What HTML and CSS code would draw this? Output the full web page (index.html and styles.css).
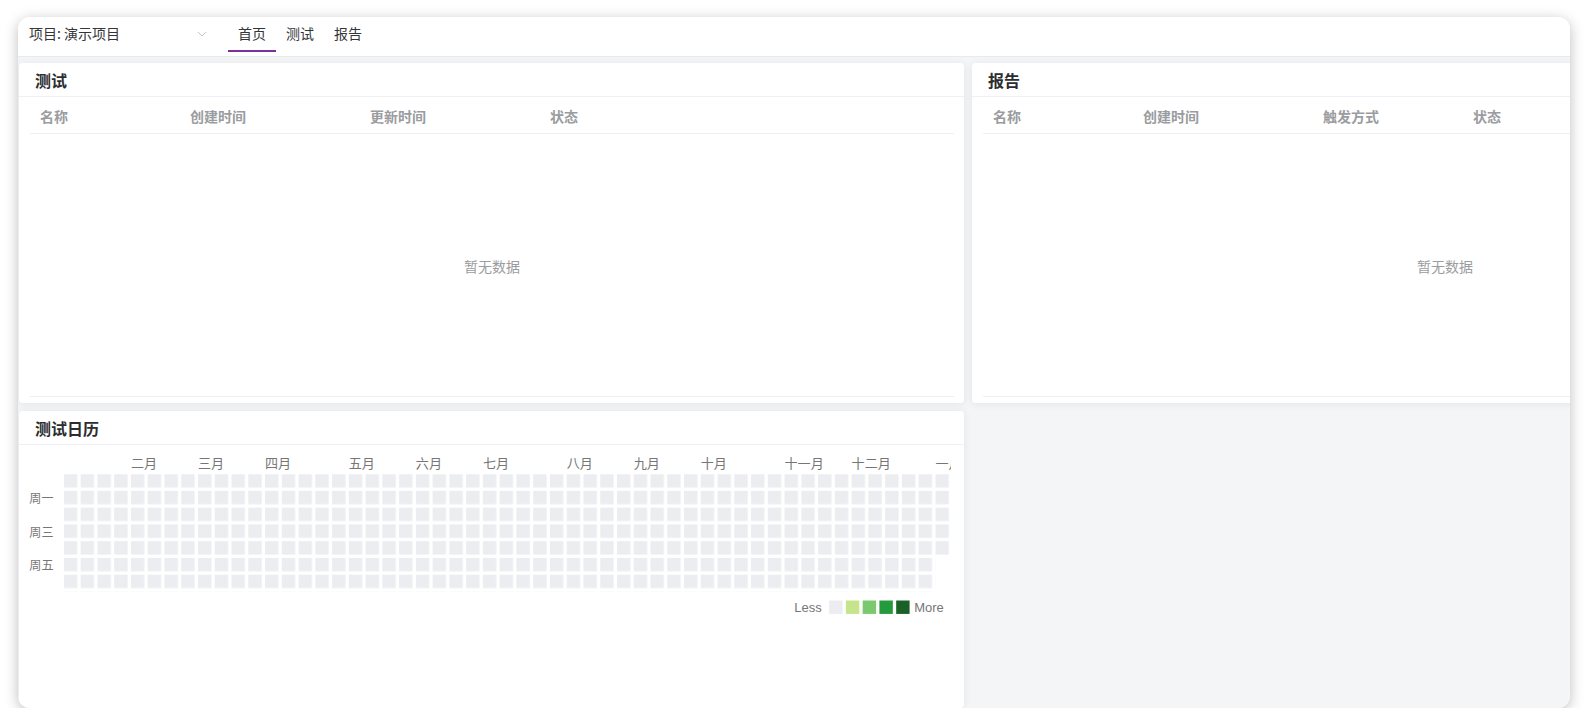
FILE: index.html
```html
<!DOCTYPE html>
<html lang="zh-CN">
<head>
<meta charset="utf-8">
<title>首页</title>
<link rel="stylesheet" href="styles.css">
</head>
<body>
<div class="window">
  <header class="topbar">
    <div class="project-select">
      <span class="project-label">项目: 演示项目</span>
      <svg class="chevron" width="10" height="6" viewBox="0 0 10 6"><polyline points="1,1 5,5 9,1" fill="none" stroke="#c4c4c8" stroke-width="1"/></svg>
    </div>
    <nav class="tabs">
      <div class="tab active">首页</div>
      <div class="tab">测试</div>
      <div class="tab">报告</div>
    </nav>
  </header>
  <main class="content">
    <section class="card card-top">
      <div class="card-title">测试</div>
      <div class="table">
        <div class="thead">
          <div class="th w150">名称</div>
          <div class="th w180">创建时间</div>
          <div class="th w180">更新时间</div>
          <div class="th grow">状态</div>
        </div>
        <div class="tbody"><span class="empty">暂无数据</span></div>
      </div>
    </section>
    <section class="card card-top">
      <div class="card-title">报告</div>
      <div class="table">
        <div class="thead">
          <div class="th w150">名称</div>
          <div class="th w180">创建时间</div>
          <div class="th w150">触发方式</div>
          <div class="th grow">状态</div>
        </div>
        <div class="tbody"><span class="empty">暂无数据</span></div>
      </div>
    </section>
    <section class="card card-cal">
      <div class="card-title">测试日历</div>
      <svg class="heatmap" viewBox="0 0 554.3 100" width="929" height="167.6">
        <defs>
          <pattern id="cells" x="25" y="15" width="10" height="10" patternUnits="userSpaceOnUse">
            <rect width="8" height="8" fill="#ebedf0"/>
          </pattern>
        </defs>
        <g class="months">
          <text x="65" y="8.2">二月</text>
          <text x="105" y="8.2">三月</text>
          <text x="145" y="8.2">四月</text>
          <text x="195" y="8.2">五月</text>
          <text x="235" y="8.2">六月</text>
          <text x="275" y="8.2">七月</text>
          <text x="325" y="8.2">八月</text>
          <text x="365" y="8.2">九月</text>
          <text x="405" y="8.2">十月</text>
          <text x="455" y="8.2">十一月</text>
          <text x="495" y="8.2">十二月</text>
          <text x="545" y="8.2">一月</text>
        </g>
        <g class="days">
          <text x="4.4" y="29">周一</text>
          <text x="4.4" y="49">周三</text>
          <text x="4.4" y="69">周五</text>
        </g>
        <rect x="25" y="15" width="520" height="70" fill="url(#cells)"/>
        <rect x="545" y="15" width="10" height="50" fill="url(#cells)"/>
        <g class="legend">
          <text class="less" x="477.2" y="94.6">Less</text>
          <rect x="481.6" y="90.4" width="8" height="8" fill="#ebedf0"/>
          <rect x="491.6" y="90.4" width="8" height="8" fill="#c6e48b"/>
          <rect x="501.6" y="90.4" width="8" height="8" fill="#7bc96f"/>
          <rect x="511.6" y="90.4" width="8" height="8" fill="#239a3b"/>
          <rect x="521.6" y="90.4" width="8" height="8" fill="#196127"/>
          <text class="more" x="532.4" y="94.6">More</text>
        </g>
      </svg>
    </section>
  </main>
</div>
</body>
</html>
```

FILE: styles.css
```css
html, body {
  margin: 0;
  padding: 0;
  background: #ffffff;
}

body {
  font-family: "Liberation Sans", "Noto Sans CJK SC", sans-serif;
  color: #333639;
  overflow: hidden;
}

.window {
  margin: 17px 0 0 18px;
  width: 1552px;
  height: 691px;
  border-radius: 12px;
  background: #ffffff;
  box-shadow: 0 3px 14px rgba(0, 0, 0, 0.26);
  overflow: hidden;
  display: flex;
  flex-direction: column;
}

.topbar {
  height: 39px;
  flex: 0 0 auto;
  display: flex;
  align-items: flex-start;
  border-bottom: 1px solid #e9e9ee;
  background: #ffffff;
}

.project-select {
  width: 200px;
  height: 35px;
  padding: 0 10px 3px 11px;
  box-sizing: border-box;
  display: flex;
  align-items: center;
  justify-content: space-between;
}

.project-label {
  font-size: 14px;
  line-height: 20px;
  color: #333639;
  font-family: "Noto Sans CJK SC", sans-serif;
}

.chevron {
  display: block;
  margin-right: 1px;
  margin-top: 1px;
}

.tabs {
  display: flex;
  margin-left: 10px;
}

.tab {
  height: 35px;
  width: 48px;
  box-sizing: border-box;
  display: flex;
  align-items: center;
  justify-content: center;
  font-size: 14px;
  line-height: 20px;
  font-family: "Noto Sans CJK SC", sans-serif;
  color: #333639;
  padding-bottom: 2px;
  border-bottom: 2px solid transparent;
}

.tab.active {
  border-bottom-color: #7d2f9c;
}

.content {
  flex: 1 1 auto;
  min-height: 0;
  display: grid;
  grid-template-columns: 945px 945px;
  grid-template-rows: 340px 1fr;
  gap: 8px;
  padding: 6px 0 0 1px;
  background: #f4f5f7;
  overflow: hidden;
}

.card {
  background: #ffffff;
  border-radius: 4px;
  box-shadow: 0 1px 8px rgba(0, 0, 0, 0.07);
  display: flex;
  flex-direction: column;
  overflow: hidden;
}

.card-cal {
  grid-column: 1;
  grid-row: 2;
}

.card-title {
  height: 33px;
  flex: 0 0 auto;
  border-bottom: 1px solid #efeff5;
  padding-left: 16px;
  display: flex;
  align-items: center;
  font-family: "Noto Sans CJK SC", sans-serif;
  font-size: 16px;
  font-weight: 700;
  color: #2b2d30;
}

.table {
  margin: 0 10px 6px 11px;
  display: flex;
  flex-direction: column;
  flex: 1 1 auto;
  border-bottom: 1px solid #efeff5;
}

.thead {
  height: 36px;
  display: flex;
  border-bottom: 1px solid #efeff5;
}

.th {
  box-sizing: border-box;
  padding-left: 10px;
  display: flex;
  align-items: center;
  font-family: "Noto Sans CJK SC", sans-serif;
  font-size: 14px;
  font-weight: 700;
  color: #9a9ca0;
  padding-top: 2px;
}

.w150 { width: 150px; flex: 0 0 150px; }
.w180 { width: 180px; flex: 0 0 180px; }
.grow { flex: 1 1 auto; }

.tbody {
  flex: 1 1 auto;
  display: flex;
  align-items: center;
  justify-content: center;
}

.empty {
  font-family: "Noto Sans CJK SC", sans-serif;
  font-size: 14px;
  color: #9a9ca0;
  margin-top: 2px;
}

.heatmap {
  display: block;
  margin: 4px 0 0 3px;
  overflow: hidden;
}

.heatmap text {
  fill: #767676;
  font-family: "Noto Sans CJK SC", sans-serif;
  dominant-baseline: central;
}

.months text {
  font-size: 7.8px;
}

.days text {
  font-size: 7.2px;
}

.legend text {
  font-family: "Liberation Sans", sans-serif;
  font-size: 7.75px;
}

.legend .less {
  text-anchor: end;
}
```
